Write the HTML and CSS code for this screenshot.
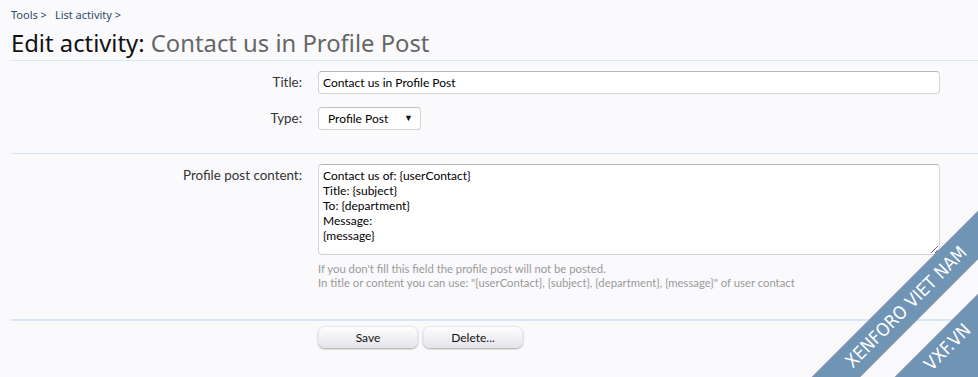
FILE: index.html
```html
<!DOCTYPE html>
<html>
<head>
<meta charset="utf-8">
<link rel="stylesheet" href="styles.css">
</head>
<body>
<div class="page">
  <nav class="breadcrumb">
    <a href="#">Tools &gt;</a>
    <a href="#">List activity &gt;</a>
  </nav>
  <h1 class="title">Edit activity: <em>Contact us in Profile Post</em></h1>

  <form class="form">
    <div class="group first">
      <div class="row">
        <label class="label">Title:</label>
        <div class="ctrl"><input class="text" type="text" value="Contact us in Profile Post"></div>
      </div>
      <div class="row">
        <label class="label">Type:</label>
        <div class="ctrl">
          <div class="select-wrap">
            <select class="select"><option>Profile Post</option></select>
            <span class="arrow">▼</span>
          </div>
        </div>
      </div>
    </div>

    <div class="group second">
      <div class="row">
        <label class="label">Profile post content:</label>
        <div class="ctrl">
          <textarea class="area">Contact us of: {userContact}
Title: {subject}
To: {department}
Message:
{message}</textarea>
          <p class="explain">If you don't fill this field the profile post will not be posted.<br>In title or content you can use: "{userContact}, {subject}, {department}, {message}" of user contact</p>
        </div>
      </div>
    </div>

    <div class="group submit">
      <div class="row">
        <div class="label"></div>
        <div class="ctrl buttons">
          <button type="button" class="button">Save</button>
          <button type="button" class="button">Delete...</button>
        </div>
      </div>
    </div>
  </form>
</div>

<div class="ribbons">
  <div class="band band1">XENFORO VIET NAM</div>
  <div class="band band2">VXF.VN</div>
</div>
</body>
</html>
```
FILE: styles.css
```css
html, body {
  margin: 0;
  padding: 0;
}
body {
  background: #fafafd;
  font-family: "Lato", "Noto Sans", sans-serif;
  font-size: 12px;
  color: #222;
  width: 978px;
  height: 377px;
  overflow: hidden;
  position: relative;
}
.page {
  padding-left: 11px;
}
.breadcrumb {
  padding-top: 7px;
  height: 16px;
  display: flex;
  gap: 8px;
  font-family: "Noto Sans", sans-serif;
  font-size: 11px;
  line-height: 16px;
}
.breadcrumb a {
  color: #2b4a66;
  text-decoration: none;
}
.title {
  margin: 6px 0 0 0;
  font-family: "Noto Sans", sans-serif;
  font-size: 23.8px;
  line-height: 28px;
  font-weight: normal;
  color: #111;
  padding-bottom: 3px;
  border-bottom: 1px solid #d4eafa;
}
.title em {
  font-style: normal;
  color: #666;
}
.form {
  margin: 0;
}
.group {
  border-bottom: 1px solid #d9e6f2;
  padding: 10px 0 22px 0;
}
.group.first {
  padding-top: 10px;
  padding-bottom: 23px;
}
.group.second {
  padding-bottom: 29px;
}
.group.submit {
  border-bottom: none;
  border-top: 1px solid #d4eafa;
  padding: 5px 0 0 0;
  margin-top: 0;
}
.row {
  display: grid;
  grid-template-columns: 291px 622px;
  column-gap: 16px;
}
.row + .row {
  margin-top: 13px;
}
.label {
  text-align: right;
  font-size: 13.4px;
  line-height: 23px;
  color: #333;
}
.text {
  box-sizing: border-box;
  width: 622px;
  height: 23px;
  margin: 0;
  border: 1px solid #d4d4d4;
  border-top-color: #b6b6b6;
  border-radius: 4px;
  background: #fff;
  font-family: inherit;
  font-size: 12px;
  padding: 0 4px;
  color: #000;
}
.select-wrap {
  position: relative;
  width: 103px;
  height: 23px;
}
.select {
  -webkit-appearance: none;
  appearance: none;
  box-sizing: border-box;
  width: 103px;
  height: 23px;
  margin: 0;
  border: 1px solid #d4d4d4;
  border-top-color: #c2c2c2;
  border-radius: 4px;
  background: #fff;
  font-family: inherit;
  font-size: 12px;
  padding: 0 9px;
  color: #000;
}
.arrow {
  position: absolute;
  right: 8px;
  top: 6px;
  font-size: 9px;
  line-height: 10px;
  color: #111;
  pointer-events: none;
}
.area {
  display: block;
  box-sizing: border-box;
  width: 622px;
  height: 91px;
  margin: 0;
  border: 1px solid #d4d4d4;
  border-top-color: #b6b6b6;
  border-radius: 4px;
  background: #fff;
  font-family: inherit;
  font-size: 12px;
  line-height: 15px;
  padding: 3px 4px;
  color: #000;
}
.explain {
  margin: 7px 0 0 0;
  font-size: 11.3px;
  line-height: 14px;
  color: #999;
}
.buttons {
  display: flex;
  gap: 5px;
}
.button {
  box-sizing: border-box;
  width: 100px;
  height: 22px;
  margin: 0;
  padding: 0;
  border: 1px solid #e6e6ee;
  border-radius: 7px;
  background: linear-gradient(#ffffff, #e4e4ec);
  box-shadow: 0 1px 2px rgba(0, 0, 0, 0.35);
  font-family: inherit;
  font-size: 12px;
  color: #111;
}

/* watermark ribbons */
.ribbons {
  position: absolute;
  right: 0;
  bottom: 0;
  width: 200px;
  height: 200px;
  overflow: hidden;
  pointer-events: none;
}
.band {
  position: absolute;
  background: #6f94b4;
  color: #fff;
  text-align: center;
  font-family: "DejaVu Sans Condensed", "DejaVu Sans", sans-serif;
  font-size: 18px;
  transform: rotate(-45deg);
  box-shadow: 0 0 1px rgba(160, 80, 80, 0.6);
}
.band1 {
  width: 360px;
  height: 34px;
  line-height: 34px;
  left: -52px;
  top: 113px;
}
.band2 {
  width: 360px;
  height: 73px;
  line-height: 32px;
  left: 4px;
  top: 148px;
}
```
